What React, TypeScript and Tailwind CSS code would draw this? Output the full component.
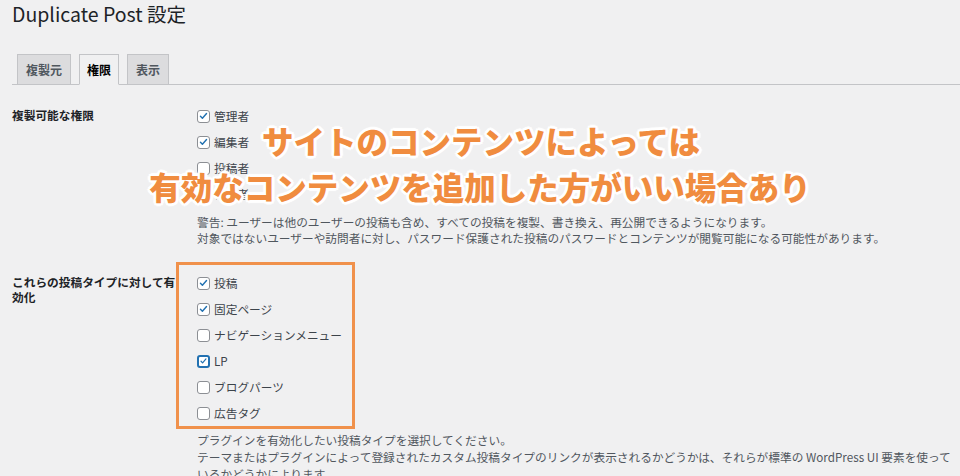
import React from 'react';

const FONT = { fontFamily: '"Noto Sans CJK JP", "Noto Sans", sans-serif' };

interface Option {
  label: string;
  checked: boolean;
  focused?: boolean;
}

const roles: Option[] = [
  { label: '管理者', checked: true },
  { label: '編集者', checked: true },
  { label: '投稿者', checked: false },
  { label: '寄稿者', checked: false },
];

const postTypes: Option[] = [
  { label: '投稿', checked: true },
  { label: '固定ページ', checked: true },
  { label: 'ナビゲーションメニュー', checked: false },
  { label: 'LP', checked: true, focused: true },
  { label: 'ブログパーツ', checked: false },
  { label: '広告タグ', checked: false },
];

function CheckRow({ option }: { option: Option }) {
  return (
    <label className="flex h-[26px] items-center gap-[4px] text-[11.7px] text-[#3c434a]">
      <span
        className={
          option.focused
            ? 'flex h-[13px] w-[13px] items-center justify-center rounded-[3px] border-2 border-[#2271b1] bg-white'
            : 'flex h-[13px] w-[13px] items-center justify-center rounded-[3px] border border-[#8c8f94] bg-white'
        }
      >
        {option.checked && (
          <svg viewBox="0 0 20 20" className="h-[12px] w-[12px]">
            <path d="M4.5 10.5l3.5 3.5 7.5-8.5" fill="none" stroke="#2271b1" strokeWidth="2.6" strokeLinecap="round" strokeLinejoin="round" />
          </svg>
        )}
      </span>
      {option.label}
    </label>
  );
}

export default function App() {
  return (
    <div className="relative h-[476px] w-[960px] overflow-hidden bg-[#f0f0f1]" style={FONT}>
      <div className="pl-[12px]">
        {/* Title */}
        <h1 className="h-[28px] text-[19.5px] leading-[28px] text-[#1d2327]">Duplicate Post 設定</h1>

        {/* Tabs */}
        <div className="mt-[26px] flex h-[31px] items-end gap-[8px] border-b border-[#c3c4c7] pl-[5px]">
          <div className="-mb-px flex h-[31px] items-center border border-[#c3c4c7] bg-[#dcdcde] px-[8px] text-[12px] font-bold text-[#50575e]">
            複製元
          </div>
          <div className="-mb-px flex h-[31px] items-center border border-[#c3c4c7] border-b-[#f0f0f1] bg-[#f0f0f1] px-[7px] text-[12px] font-bold text-black">
            権限
          </div>
          <div className="-mb-px flex h-[31px] items-center border border-[#c3c4c7] bg-[#dcdcde] px-[8px] text-[12px] font-bold text-[#50575e]">
            表示
          </div>
        </div>

        {/* Section 1 */}
        <div className="mt-[18px] flex">
          <div className="w-[185px] shrink-0 pt-[4px] text-[11.7px] font-bold leading-[16px] text-[#1d2327]">複製可能な権限</div>
          <div className="flex-1 pr-[5px]">
            {roles.map((r) => (
              <CheckRow key={r.label} option={r} />
            ))}
            <p className="mt-[7px] text-[11.7px] leading-[16px] text-[#50575e]">
              警告: ユーザーは他のユーザーの投稿も含め、すべての投稿を複製、書き換え、再公開できるようになります。
              <br />
              対象ではないユーザーや訪問者に対し、パスワード保護された投稿のパスワードとコンテンツが閲覧可能になる可能性があります。
            </p>
          </div>
        </div>

        {/* Section 2 */}
        <div className="mt-[24px] flex">
          <div className="w-[185px] shrink-0 pr-[12px] pt-[4px] text-[11.7px] font-bold leading-[15px] text-[#1d2327]">
            これらの投稿タイプに対して有効化
          </div>
          <div className="relative flex-1 pr-[5px]">
            {postTypes.map((p) => (
              <CheckRow key={p.label} option={p} />
            ))}
            {/* annotation box */}
            <div className="pointer-events-none absolute left-[-21px] top-[-8px] h-[167px] w-[179px] border-[3px] border-[#f0914b]" />
            <p className="mt-[5px] text-[11.7px] leading-[17px] text-[#50575e]">
              プラグインを有効化したい投稿タイプを選択してください。
              <br />
              テーマまたはプラグインによって登録されたカスタム投稿タイプのリンクが表示されるかどうかは、それらが標準の WordPress UI 要素を使っているかどうかによります。
            </p>
          </div>
        </div>
      </div>

      {/* Annotation overlay */}
      <div className="pointer-events-none absolute left-0 right-0 top-[117px] text-center text-[31.5px] font-black leading-[46px] text-[#f08c3f] [text-shadow:0_0_3px_#fff,2px_0_0_#fff,-2px_0_0_#fff,0_2px_0_#fff,0_-2px_0_#fff,2px_2px_0_#fff,-2px_-2px_0_#fff,2px_-2px_0_#fff,-2px_2px_0_#fff,3px_0_1px_#fff,-3px_0_1px_#fff,0_3px_1px_#fff,0_-3px_1px_#fff]">
        <div className="pl-[2px]">サイトのコンテンツによっては</div>
        <div>有効なコンテンツを追加した方がいい場合あり</div>
      </div>
    </div>
  );
}
